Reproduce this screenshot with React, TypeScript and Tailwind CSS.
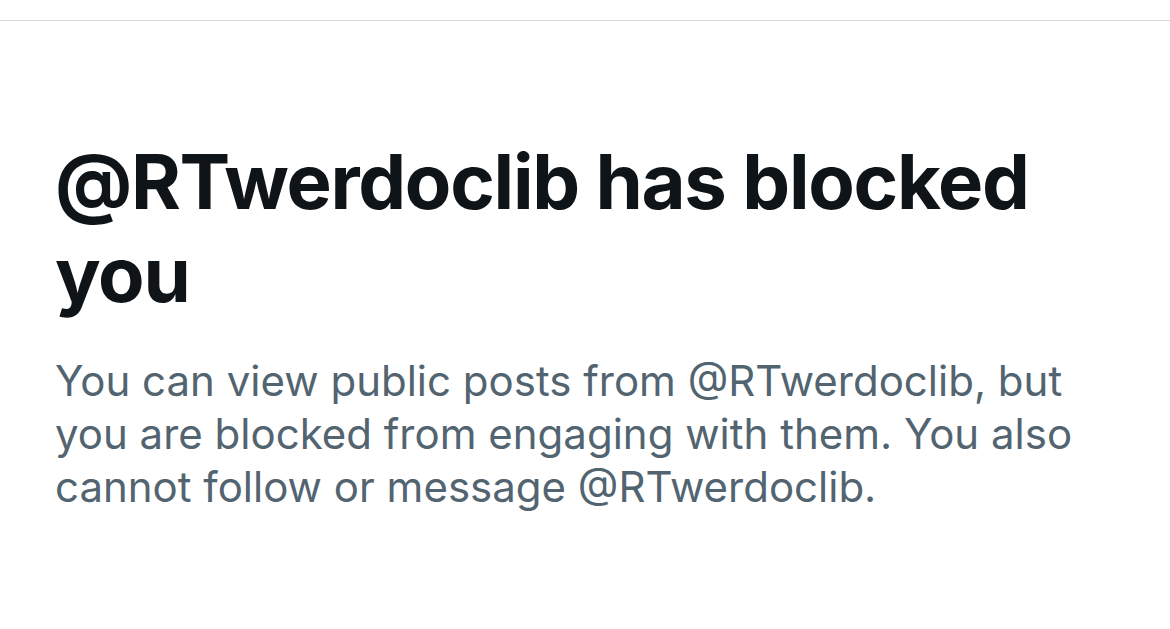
export default function App() {
  return (
    <div className="w-[1170px] h-[629px] bg-white overflow-hidden" style={{ fontFamily: "Inter, 'Noto Sans', sans-serif" }}>
      <div className="h-[20px]" />
      <div className="h-px bg-[#d9d9d9]" />
      <div className="pl-[55px] pr-[40px] pt-[114px]">
        <h1 className="text-[76px] leading-[93px] font-bold text-[#0f1419] tracking-[-1.3px]">
          @RTwerdoclib has blocked you
        </h1>
        <p className="mt-[33px] text-[42px] leading-[53px] text-[#536471] w-[1060px]">
          You can view public posts from @RTwerdoclib, but you are blocked from engaging with them. You also cannot follow or message @RTwerdoclib.
        </p>
      </div>
    </div>
  )
}
